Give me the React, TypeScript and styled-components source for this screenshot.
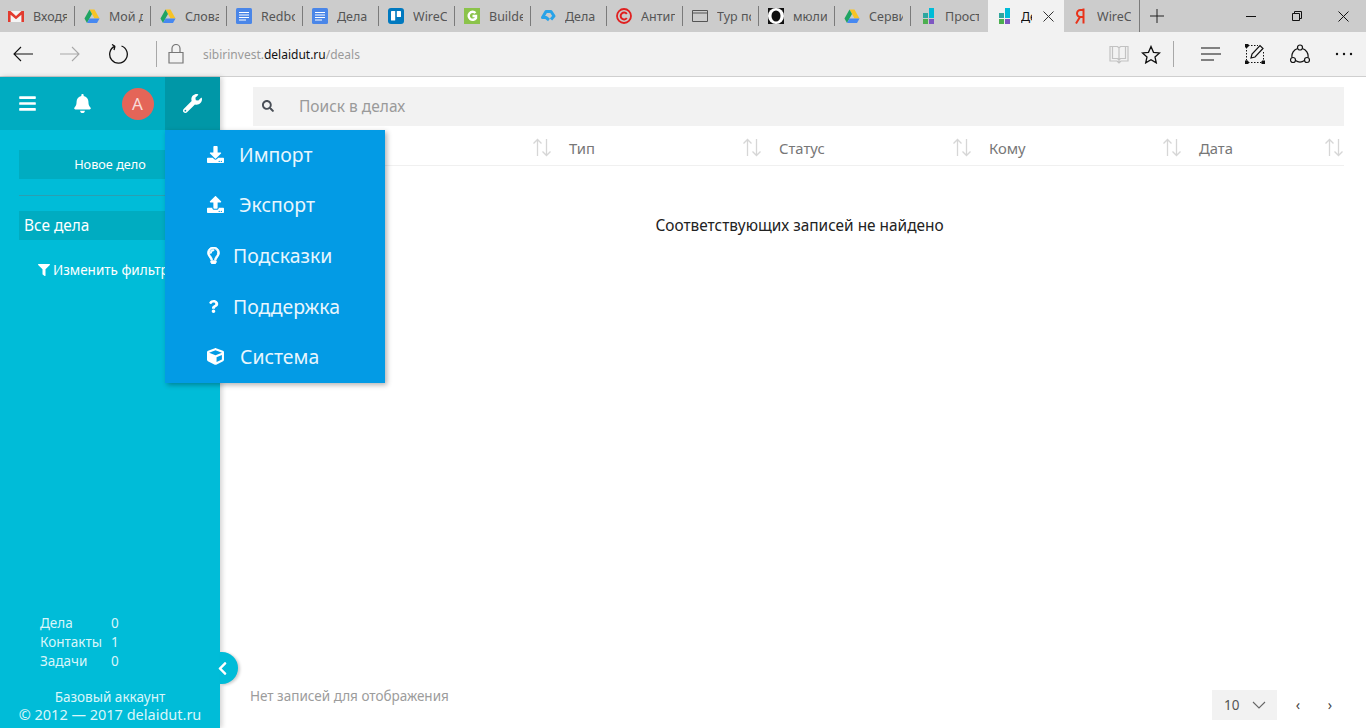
import React from 'react';
import styled, { createGlobalStyle } from 'styled-components';
import {
  FaBars,
  FaBell,
  FaChevronLeft,
  FaCube,
  FaDownload,
  FaFilter,
  FaQuestion,
  FaRegLightbulb,
  FaSearch,
  FaUpload,
  FaWrench,
} from 'react-icons/fa';

const Global = createGlobalStyle`
  html, body {
    margin: 0;
    padding: 0;
    height: 728px;
    overflow: hidden;
    background: #fff;
  }
  * { box-sizing: border-box; }
`;

const Page = styled.div`
  width: 1366px;
  height: 728px;
  display: flex;
  flex-direction: column;
  font-family: 'Noto Sans', 'Open Sans', sans-serif;
  overflow: hidden;
`;

/* browser chrome */
const TabStrip = styled.div`
  height: 32px;
  background: #cccccc;
  display: flex;
  flex: none;
`;

const Tab = styled.div<{ $active?: boolean; $plain?: boolean; $full?: boolean }>`
  width: 76px;
  height: 32px;
  display: flex;
  align-items: center;
  padding-left: 8px;
  gap: 9px;
  background: ${(p) => (p.$active ? '#f2f2f2' : 'transparent')};
  position: relative;
  &::after {
    content: '';
    display: ${(p) => (p.$plain ? 'none' : 'block')};
    position: absolute;
    right: ${(p) => (p.$full ? '0' : '1px')};
    top: ${(p) => (p.$full ? '0' : '6px')};
    height: ${(p) => (p.$full ? '32px' : '20px')};
    width: 1px;
    background: #7b7b7b;
  }
`;

const TabIcon = styled.svg`
  width: 16px;
  height: 16px;
  flex: none;
`;

const TabTitle = styled.span<{ $active?: boolean }>`
  font-size: 12.5px;
  color: ${(p) => (p.$active ? '#111' : '#555')};
  white-space: nowrap;
  overflow: hidden;
  width: ${(p) => (p.$active ? '11px' : '34px')};
  flex: none;
`;

const CloseX = styled.svg`
  width: 11px;
  height: 11px;
  margin-left: 2px;
  flex: none;
`;

const NewTab = styled.div`
  width: 34px;
  display: flex;
  align-items: center;
  justify-content: center;
`;

const WindowButtons = styled.div`
  margin-left: auto;
  display: flex;
`;

const WindowButton = styled.div`
  width: 46px;
  height: 32px;
  display: flex;
  align-items: center;
  justify-content: center;
`;

const AddressBar = styled.div`
  height: 45px;
  background: #f2f2f2;
  border-bottom: 1px solid #cfcfcf;
  display: flex;
  align-items: center;
  flex: none;
  position: relative;
`;

const NavButton = styled.div<{ $width: number }>`
  width: ${(p) => p.$width}px;
  height: 44px;
  display: flex;
  align-items: center;
  justify-content: center;
  flex: none;
`;

const Divider = styled.div`
  width: 1px;
  height: 26px;
  background: #a8a8a8;
  flex: none;
`;

const Url = styled.div`
  font-size: 12px;
  color: #9a9a9a;
  margin-left: 9px;
  b {
    font-weight: 400;
    color: #111;
  }
`;

const ToolsRight = styled.div`
  margin-left: auto;
  display: flex;
  align-items: center;
`;

/* app */
const Body = styled.div`
  flex: 1;
  display: flex;
  min-height: 0;
  position: relative;
`;

const Sidebar = styled.aside`
  width: 220px;
  flex: none;
  background: #00bcd8;
  display: flex;
  flex-direction: column;
  color: #fff;
  position: relative;
  box-shadow: 2px 0 5px rgba(0, 0, 0, 0.18);
  z-index: 2;
`;

const TopNav = styled.div`
  height: 53px;
  background: #00acc1;
  display: flex;
  flex: none;
`;

const NavCell = styled.div<{ $active?: boolean }>`
  width: 55px;
  display: flex;
  align-items: center;
  justify-content: center;
  background: ${(p) => (p.$active ? '#0097a7' : 'transparent')};
  font-size: 19px;
`;

const Avatar = styled.div`
  width: 32px;
  height: 32px;
  border-radius: 50%;
  background: #e46558;
  color: #f8dcd8;
  font-size: 17px;
  display: flex;
  align-items: center;
  justify-content: center;
`;

const SideBlock = styled.div`
  padding: 20px 19px 0;
  display: flex;
  flex-direction: column;
`;

const NewDeal = styled.div`
  height: 29px;
  background: #00acc1;
  font-size: 12.7px;
  line-height: 29px;
  text-align: center;
`;

const SideRule = styled.div`
  height: 1px;
  background: #2a9fb2;
  margin: 16px 0 15px;
`;

const AllDeals = styled.div`
  height: 29px;
  background: #00acc1;
  font-size: 15.4px;
  line-height: 30px;
  padding-left: 5px;
`;

const FilterLink = styled.div`
  display: flex;
  align-items: center;
  gap: 3px;
  font-size: 13.5px;
  margin: 21px 0 0 19px;
  white-space: nowrap;
  svg {
    font-size: 12px;
  }
`;

const Stats = styled.div`
  margin-top: auto;
  padding-left: 40px;
  display: grid;
  grid-template-columns: 71px auto;
  justify-content: start;
  font-size: 13.5px;
  line-height: 19px;
  color: #d9f6fa;
`;

const SideFooter = styled.div`
  margin: 18px 0 4px;
  text-align: center;
  font-size: 13.5px;
  line-height: 17px;
  color: #d9f6fa;
  white-space: nowrap;
`;

const Copyright = styled.span`
  font-size: 14.5px;
`;

const Collapse = styled.div`
  position: absolute;
  right: -18px;
  top: 575px;
  width: 18px;
  height: 32px;
  background: #00bcd8;
  border-radius: 0 16px 16px 0;
  box-shadow: 2px 1px 3px rgba(0, 0, 0, 0.2);
  display: flex;
  align-items: center;
  color: #fff;
  font-size: 15px;
  svg {
    margin-left: -5px;
    flex: none;
  }
`;

const Menu = styled.div`
  position: absolute;
  left: 165px;
  top: 53px;
  width: 220px;
  height: 253px;
  background: #039be5;
  box-shadow: 2px 2px 5px rgba(0, 0, 0, 0.3);
  color: #fff;
  z-index: 3;
  display: flex;
  flex-direction: column;
`;

const MenuItem = styled.div<{ $pad: number; $gap: number; $size?: number }>`
  flex: 1;
  display: flex;
  align-items: center;
  padding: 0 0 2px ${(p) => p.$pad}px;
  gap: ${(p) => p.$gap}px;
  font-size: 19.4px;
  color: #e8f6fd;
  svg {
    font-size: ${(p) => p.$size ?? 17}px;
    flex: none;
    color: #fff;
  }
`;

const Main = styled.main`
  flex: 1;
  display: flex;
  flex-direction: column;
  min-width: 0;
  padding: 10px 22px 8px 33px;
`;

const Search = styled.div`
  height: 39px;
  background: #f2f2f2;
  display: flex;
  align-items: center;
  padding: 0 0 2px 9px;
  flex: none;
  color: #4a4f57;
  font-size: 12px;
  gap: 25px;
  span {
    font-size: 15.5px;
    color: #9a9a9a;
  }
`;

const HeadRow = styled.div`
  margin-top: 4px;
  height: 36px;
  display: grid;
  grid-template-columns: 306px 210px 210px 210px 155px;
  border-bottom: 1px solid #f0f0f0;
  flex: none;
`;

const HeadCell = styled.div`
  display: flex;
  align-items: center;
  justify-content: space-between;
  padding-left: 10px;
  font-size: 14.8px;
  color: #777;
`;

const SortIcon = styled.svg`
  width: 20px;
  height: 19px;
  margin-right: 7px;
  flex: none;
`;

const LastSort = styled(SortIcon)`
  margin-right: 0;
`;

const Empty = styled.div`
  text-align: center;
  font-size: 15.4px;
  color: #222;
  margin-top: 49px;
  padding-left: 2px;
`;

const Foot = styled.div`
  margin-top: auto;
  display: flex;
  margin-left: -3px;
  margin-right: -2px;
  height: 30px;
`;

const FootNote = styled.div`
  font-size: 13.5px;
  color: #9c9c9c;
  margin-top: -3px;
`;

const PageSize = styled.div`
  margin-left: auto;
  width: 65px;
  height: 30px;
  background: #f2f2f2;
  display: flex;
  align-items: center;
  justify-content: space-between;
  padding: 0 11px 0 12px;
  font-size: 13.5px;
  color: #555;
`;

const PagerArrow = styled.div`
  width: 32px;
  text-align: center;
  font-size: 14px;
  color: #444;
  padding-top: 5px;
`;

const Pager = styled.div`
  display: flex;
  margin-left: 5px;
`;

const Sort = ({ last }: { last?: boolean }) => {
  const Icon = last ? LastSort : SortIcon;
  return (
    <Icon viewBox="0 0 20 19" fill="none" stroke="#d6d6d6" strokeWidth="1.3">
      <path d="M5.500 18V1.500M1.500 5.500l4-4 4 4" />
      <path d="M14.500 1v16.500M10.500 13.500l4 4 4-4" />
    </Icon>
  );
};

type FavKind = 'gmail' | 'drive' | 'doc' | 'trello' | 'builder' | 'delo' | 'copy' | 'tour' | 'dot' | 'squares' | 'ya';

const Favicon = ({ kind }: { kind: FavKind }) => {
  switch (kind) {
    case 'gmail':
      return (
        <TabIcon viewBox="0 0 16 16">
          <path d="M0 3h16v11H0z" fill="#f4f4f4" />
          <path d="M0 3h2.500L8 8l5.500-5H16v11h-2.600V6.800L8 11.200 2.600 6.800V14H0z" fill="#e23b2f" />
        </TabIcon>
      );
    case 'drive':
      return (
        <TabIcon viewBox="0 0 16 16">
          <path d="M5.500 1.500h5l5 9h-5z" fill="#f7c325" />
          <path d="M5.500 1.500L0.500 10.500 3 15l5-9z" fill="#1fa463" />
          <path d="M3 15h10l2.500-4.500H5.500z" fill="#4688f1" />
        </TabIcon>
      );
    case 'doc':
      return (
        <TabIcon viewBox="0 0 16 16">
          <rect width="16" height="16" rx="1.500" fill="#4a86e8" />
          <path d="M3 4.500h10M3 7h10M3 9.500h10M3 12h7" stroke="#fff" strokeWidth="1" />
        </TabIcon>
      );
    case 'trello':
      return (
        <TabIcon viewBox="0 0 16 16">
          <rect width="16" height="16" rx="3" fill="#0079bf" />
          <rect x="3" y="3" width="4.200" height="9.500" rx="0.600" fill="#fff" />
          <rect x="8.800" y="3" width="4.200" height="6" rx="0.600" fill="#fff" />
        </TabIcon>
      );
    case 'builder':
      return (
        <TabIcon viewBox="0 0 16 16">
          <rect width="16" height="16" fill="#8bc34a" />
          <path d="M11.500 5A4 4 0 1 0 12 10V8H8.500" fill="none" stroke="#fff" strokeWidth="2.400" />
        </TabIcon>
      );
    case 'delo':
      return (
        <TabIcon viewBox="0 0 16 16" fill="none" stroke="#29a3e8" strokeWidth="3" strokeLinejoin="round">
          <path d="M9 12L6 9.500H2.500L6 3.500h5l3 4.500-3 3.500" />
        </TabIcon>
      );
    case 'copy':
      return (
        <TabIcon viewBox="0 0 16 16" fill="none" stroke="#e02020">
          <circle cx="8" cy="8" r="7" strokeWidth="1.800" />
          <path d="M10.800 6A3.400 3.400 0 1 0 10.800 10" strokeWidth="2" />
        </TabIcon>
      );
    case 'tour':
      return (
        <TabIcon viewBox="0 0 16 16" fill="none" stroke="#555">
          <path d="M0.500 2.500h15v11h-15zM0.500 5h15" strokeWidth="1" />
        </TabIcon>
      );
    case 'dot':
      return (
        <TabIcon viewBox="0 0 16 16">
          <rect width="16" height="16" fill="#111" />
          <circle cx="8" cy="8" r="8" fill="#fff" />
          <ellipse cx="8" cy="8" rx="4.500" ry="5.500" fill="#111" />
        </TabIcon>
      );
    case 'squares':
      return (
        <TabIcon viewBox="0 0 16 16">
          <rect x="3" y="5" width="5" height="5" fill="#2ea69f" />
          <rect x="9" y="0" width="5" height="10" fill="#00bcd8" />
          <rect x="3" y="11" width="5" height="5" fill="#4caf50" />
          <rect x="9" y="11" width="5" height="5" fill="#7e57c2" />
        </TabIcon>
      );
    default:
      return (
        <TabIcon viewBox="0 0 16 16" fill="none" stroke="#e8321a" strokeWidth="2">
          <path d="M11.500 0.500V15.500M11.500 2H8.500a3.500 3.500 0 0 0 0 7h3M8 9l-4 6.500" />
        </TabIcon>
      );
  }
};

const tabs: { icon: FavKind; title: string }[] = [
  { icon: 'gmail', title: 'Входя' },
  { icon: 'drive', title: 'Мой д' },
  { icon: 'drive', title: 'Слова' },
  { icon: 'doc', title: 'Redbo' },
  { icon: 'doc', title: 'Дела' },
  { icon: 'trello', title: 'WireC' },
  { icon: 'builder', title: 'Builde' },
  { icon: 'delo', title: 'Дела' },
  { icon: 'copy', title: 'Антиг' },
  { icon: 'tour', title: 'Тур пс' },
  { icon: 'dot', title: 'мюли' },
  { icon: 'drive', title: 'Серви' },
  { icon: 'squares', title: 'Прост' },
];

const App = () => (
  <Page>
    <Global />
    <TabStrip>
      {tabs.map((t, i) => (
        <Tab key={i} $plain={i === tabs.length - 1}>
          <Favicon kind={t.icon} />
          <TabTitle>{t.title}</TabTitle>
        </Tab>
      ))}
      <Tab $active $plain>
        <Favicon kind="squares" />
        <TabTitle $active>Де</TabTitle>
        <CloseX viewBox="0 0 11 11" stroke="#333" strokeWidth="1">
          <path d="M0.500 0.500l10 10M10.500 0.500l-10 10" />
        </CloseX>
      </Tab>
      <Tab $full>
        <Favicon kind="ya" />
        <TabTitle>WireC</TabTitle>
      </Tab>
      <NewTab>
        <svg width="14" height="14" viewBox="0 0 14 14" stroke="#222" strokeWidth="1">
          <path d="M7 0v14M0 7h14" />
        </svg>
      </NewTab>
      <WindowButtons>
        <WindowButton>
          <svg width="10" height="10" viewBox="0 0 10 10" stroke="#111">
            <path d="M0 5.500h10" />
          </svg>
        </WindowButton>
        <WindowButton>
          <svg width="10" height="10" viewBox="0 0 10 10" fill="none" stroke="#111">
            <path d="M0.500 2.500h7v7h-7zM2.500 2.500v-2h7v7h-2" />
          </svg>
        </WindowButton>
        <WindowButton>
          <svg width="11" height="11" viewBox="0 0 11 11" stroke="#111">
            <path d="M0.500 0.500l10 10M10.500 0.500l-10 10" />
          </svg>
        </WindowButton>
      </WindowButtons>
    </TabStrip>
    <AddressBar>
      <NavButton $width={45}>
        <svg width="20" height="16" viewBox="0 0 20 16" fill="none" stroke="#111" strokeWidth="1.100">
          <path d="M20 8H1M8 1L1 8l7 7" />
        </svg>
      </NavButton>
      <NavButton $width={50}>
        <svg width="20" height="16" viewBox="0 0 20 16" fill="none" stroke="#a8a8a8" strokeWidth="1.100">
          <path d="M0 8h19M12 1l7 7-7 7" />
        </svg>
      </NavButton>
      <NavButton $width={46}>
        <svg width="20" height="20" viewBox="0 0 20 20" fill="none" stroke="#111" strokeWidth="1.300">
          <path d="M7 2.200A8.800 8.800 0 1 0 13.500 2M7 2.200L4 0.500M7 2.200L6 6" />
        </svg>
      </NavButton>
      <NavButton $width={15} />
      <Divider />
      <NavButton $width={37}>
        <svg width="16" height="20" viewBox="0 0 16 20" fill="none" stroke="#777" strokeWidth="1.200">
          <path d="M1 8.500h14v10.500H1zM4 8.500V4.500a4 4 0 0 1 8 0v4" />
        </svg>
      </NavButton>
      <Url>
        sibirinvest.<b>delaidut.ru</b>/deals
      </Url>
      <ToolsRight>
        <NavButton $width={24}>
          <svg width="20" height="19" viewBox="0 0 20 19" fill="none" stroke="#c2c2c2" strokeWidth="1.200">
            <path d="M1 1.500h7.500L10 3l1.500-1.500H19V16h-7l-2 2-2-2H1zM10 3v15M3.500 1.500V13.500h5L10 15l1.500-1.500h5V1.500" />
          </svg>
        </NavButton>
        <NavButton $width={40}>
          <svg width="20" height="19" viewBox="0 0 20 19" fill="none" stroke="#111" strokeWidth="1.300">
            <path d="M10 1.500l2.500 5.800 6 .6-4.500 4 1.300 6L10 14.800l-5.300 3.100 1.300-6-4.500-4 6-.6z" />
          </svg>
        </NavButton>
        <NavButton $width={2} />
        <Divider />
        <NavButton $width={16} />
        <NavButton $width={42}>
          <svg width="20" height="14" viewBox="0 0 20 14" stroke="#111" strokeWidth="1.100">
            <path d="M0 1h19M0 7h20M0 13h13" />
          </svg>
        </NavButton>
        <NavButton $width={46}>
          <svg width="20" height="20" viewBox="0 0 20 20" fill="none" stroke="#111">
            <path d="M1.500 3v14M18.500 8v9M3 1.500h10M3 18.500h14" strokeDasharray="1.500 1.500" />
            <path d="M0 0h3v3H0zM0 17h3v3H0zM17 17h3v3h-3z" fill="#111" />
            <path d="M6 14l1-4 8-8.500 3 3L10 13z" strokeWidth="1.200" />
          </svg>
        </NavButton>
        <NavButton $width={44}>
          <svg width="20" height="20" viewBox="0 0 20 20" fill="none" stroke="#111" strokeWidth="1.200">
            <circle cx="10" cy="3.500" r="2.500" />
            <circle cx="3" cy="16" r="2.500" />
            <circle cx="17" cy="16" r="2.500" />
            <path d="M7.700 4.500A8 8 0 0 0 2 13.500M12.300 4.500A8 8 0 0 1 18 13.500M5.500 16.500a8 8 0 0 0 9 0" />
          </svg>
        </NavButton>
        <NavButton $width={44}>
          <svg width="18" height="4" viewBox="0 0 18 4" fill="#111">
            <circle cx="2" cy="2" r="1.200" />
            <circle cx="9" cy="2" r="1.200" />
            <circle cx="16" cy="2" r="1.200" />
          </svg>
        </NavButton>
      </ToolsRight>
    </AddressBar>
    <Body>
      <Sidebar>
        <TopNav>
          <NavCell>
            <FaBars />
          </NavCell>
          <NavCell>
            <FaBell />
          </NavCell>
          <NavCell>
            <Avatar>А</Avatar>
          </NavCell>
          <NavCell $active>
            <FaWrench />
          </NavCell>
        </TopNav>
        <SideBlock>
          <NewDeal>Новое дело</NewDeal>
          <SideRule />
          <AllDeals>Все дела</AllDeals>
          <FilterLink>
            <FaFilter />
            Изменить фильтры
          </FilterLink>
        </SideBlock>
        <Stats>
          <span>Дела</span>
          <span>0</span>
          <span>Контакты</span>
          <span>1</span>
          <span>Задачи</span>
          <span>0</span>
        </Stats>
        <SideFooter>
          Базовый аккаунт
          <br />
          <Copyright>© 2012 — 2017 delaidut.ru</Copyright>
        </SideFooter>
        <Collapse>
          <FaChevronLeft />
        </Collapse>
      </Sidebar>
      <Menu>
        <MenuItem $pad={42} $gap={15}>
          <FaDownload />
          Импорт
        </MenuItem>
        <MenuItem $pad={42} $gap={15}>
          <FaUpload />
          Экспорт
        </MenuItem>
        <MenuItem $pad={39.5} $gap={11.5}>
          <FaRegLightbulb stroke="currentColor" strokeWidth={30} />
          Подсказки
        </MenuItem>
        <MenuItem $pad={41.5} $gap={13.5} $size={13}>
          <FaQuestion />
          Поддержка
        </MenuItem>
        <MenuItem $pad={42} $gap={16}>
          <FaCube />
          Система
        </MenuItem>
      </Menu>
      <Main>
        <Search>
          <FaSearch />
          <span>Поиск в делах</span>
        </Search>
        <HeadRow>
          <HeadCell>
            <span />
            <Sort />
          </HeadCell>
          <HeadCell>
            Тип
            <Sort />
          </HeadCell>
          <HeadCell>
            Статус
            <Sort />
          </HeadCell>
          <HeadCell>
            Кому
            <Sort />
          </HeadCell>
          <HeadCell>
            Дата
            <Sort last />
          </HeadCell>
        </HeadRow>
        <Empty>Соответствующих записей не найдено</Empty>
        <Foot>
          <FootNote>Нет записей для отображения</FootNote>
          <PageSize>
            10
            <svg width="14" height="8" viewBox="0 0 14 8" fill="none" stroke="#666" strokeWidth="1.100">
              <path d="M1 1l6 6 6-6" />
            </svg>
          </PageSize>
          <Pager>
            <PagerArrow>‹</PagerArrow>
            <PagerArrow>›</PagerArrow>
          </Pager>
        </Foot>
      </Main>
    </Body>
  </Page>
);

export default App;
